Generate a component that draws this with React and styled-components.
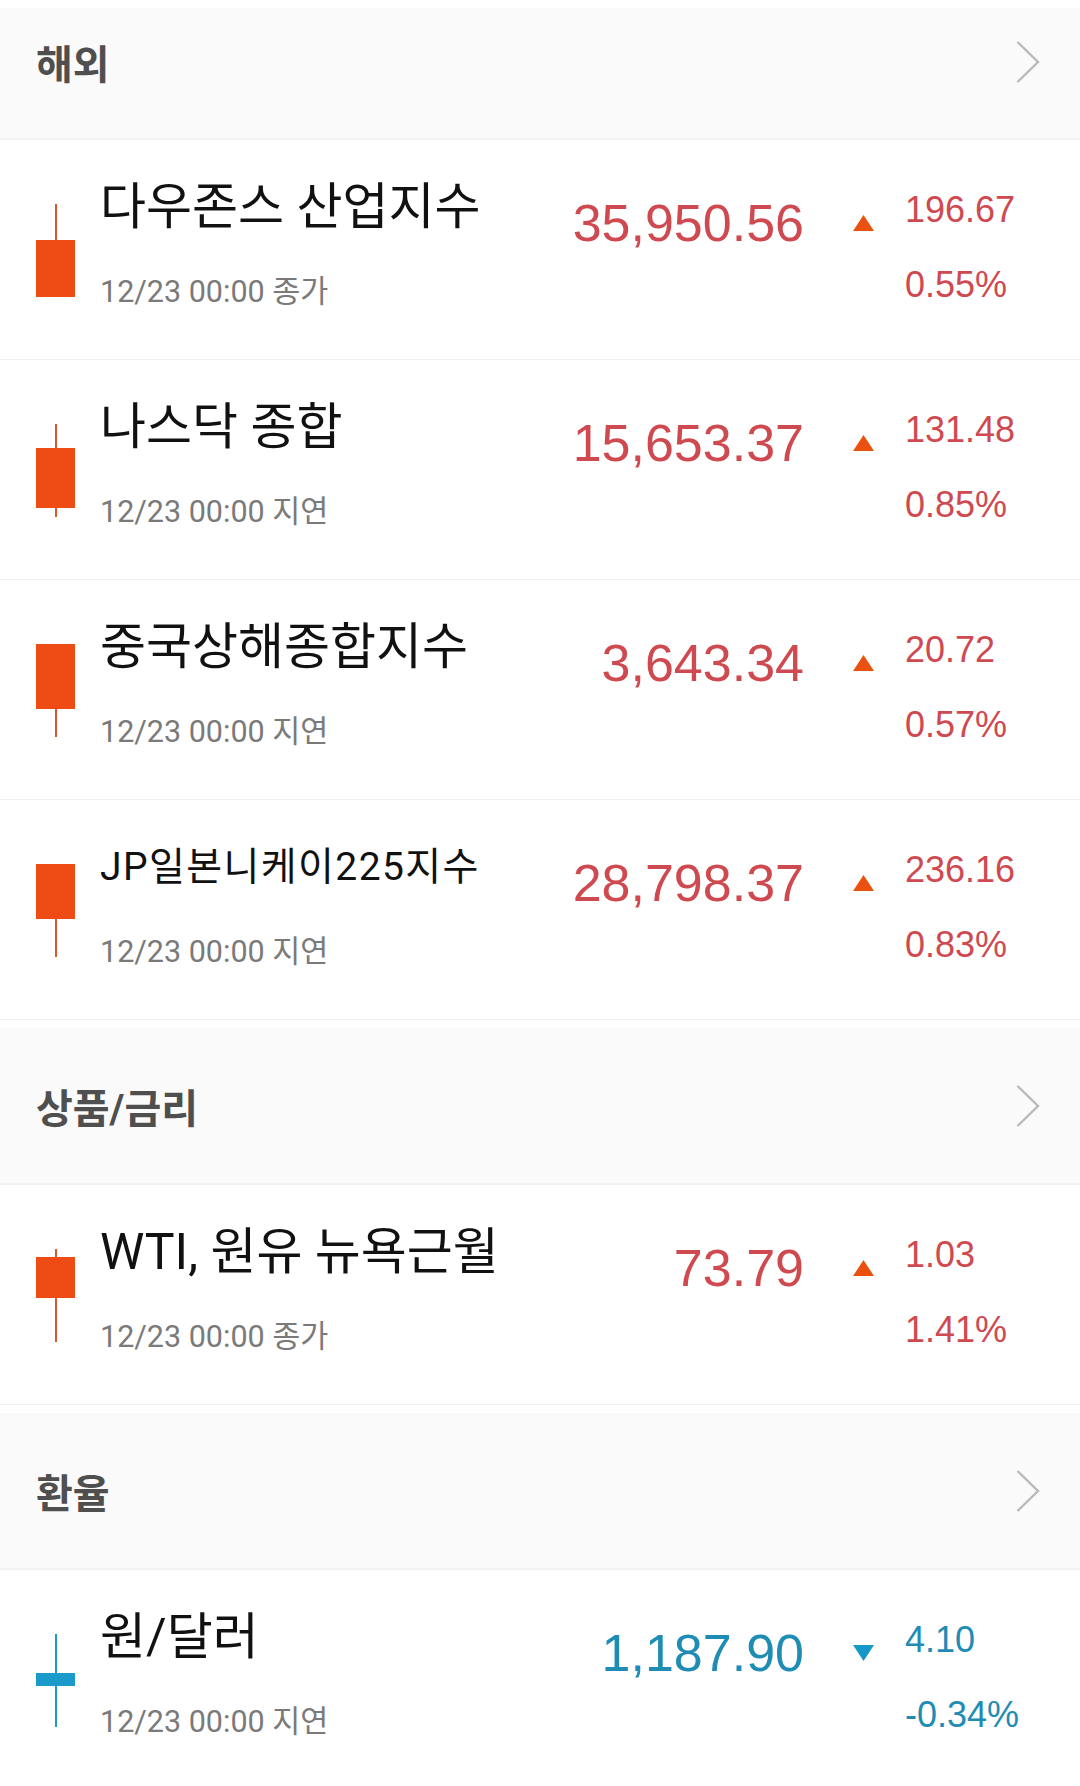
import React from "react";
import styled, { createGlobalStyle } from "styled-components";

const GlobalStyle = createGlobalStyle`
  html, body {
    margin: 0;
    padding: 0;
    background: #ffffff;
  }
  body {
    font-family: Roboto, "Noto Sans CJK KR", sans-serif;
    -webkit-font-smoothing: antialiased;
  }
`;

const Page = styled.div`
  width: 1080px;
  background: #ffffff;
`;

const Section = styled.section`
  margin-top: 8px;
`;

const Header = styled.div`
  box-sizing: border-box;
  height: ${(p) => (p.$first ? "132px" : "157px")};
  padding: 0 40px ${(p) => (p.$first ? "22px" : "0")} 36px;
  display: flex;
  align-items: center;
  justify-content: space-between;
  background: #fafafa;
  border-bottom: 2px solid #f2f2f2;
`;

const HeaderTitle = styled.h2`
  margin: 0;
  padding-top: 8px;
  font-family: Roboto, "Noto Sans CJK KR", sans-serif;
  font-size: 40px;
  font-weight: 700;
  line-height: 42px;
  color: #4f4f4f;
`;

const Row = styled.div`
  box-sizing: border-box;
  height: 220px;
  display: flex;
  align-items: flex-start;
  padding-left: 36px;
  border-bottom: 1px solid #f0f0f0;
`;

const CandleBox = styled.div`
  width: 40px;
  height: 93px;
  margin-top: 64px;
  flex: none;
`;

const Info = styled.div`
  flex: 1;
  min-width: 0;
  margin-left: 24px;
  padding-top: 42px;
`;

const Name = styled.div`
  font-size: ${(p) => (p.$small ? "39px" : "50px")};
  letter-spacing: ${(p) => (p.$small ? "1.4px" : "0")};
  line-height: 50px;
  color: #111111;
  white-space: nowrap;
`;

const Sub = styled.div`
  margin-top: 44px;
  font-size: 30.5px;
  line-height: 31px;
  color: #7a7a7a;
  white-space: nowrap;
`;

const Price = styled.div`
  margin-top: 57px;
  margin-right: 49px;
  font-family: "Liberation Sans", Arial, sans-serif;
  font-size: 52px;
  line-height: 52px;
  color: ${(p) => (p.$down ? "#1f8cb4" : "#cf4a50")};
  text-align: right;
  white-space: nowrap;
`;

const Arrow = styled.svg`
  flex: none;
  margin-top: 75px;
  margin-right: 31px;
`;

const Changes = styled.div`
  width: 175px;
  flex: none;
  padding-top: 52px;
  display: flex;
  flex-direction: column;
  gap: 39px;
`;

const ChangeText = styled.div`
  font-family: "Liberation Sans", Arial, sans-serif;
  font-size: 36px;
  line-height: 36px;
  color: ${(p) => (p.$down ? "#1f8cb4" : "#cf4a50")};
  white-space: nowrap;
`;

const Chevron = () => (
  <svg width="24" height="42" viewBox="0 0 24 42">
    <polyline
      points="1.5,1 22,21 1.5,41"
      fill="none"
      stroke="#b9b9b9"
      strokeWidth="2.4"
    />
  </svg>
);

const Candle = ({ wickTop, bodyTop, bodyBottom, wickBottom, down }) => {
  const body = down ? "#1a9acb" : "#ee4b15";
  const wick = down ? "#1a9acb" : "#d9572b";
  return (
    <svg width="40" height="93" viewBox="0 0 40 93">
      <rect x="19" y={wickTop} width="2" height={wickBottom - wickTop} fill={wick} />
      <rect x="0" y={bodyTop} width="39" height={bodyBottom - bodyTop} fill={body} />
    </svg>
  );
};

const Triangle = ({ down }) => (
  <Arrow width="21" height="16" viewBox="0 0 21 16">
    {down ? (
      <polygon points="0,0 21,0 10.5,16" fill="#1597c8" />
    ) : (
      <polygon points="10.5,0 21,16 0,16" fill="#e8520e" />
    )}
  </Arrow>
);

const sections = [
  {
    title: "해외",
    items: [
      {
        name: "다우존스 산업지수",
        sub: "12/23 00:00 종가",
        price: "35,950.56",
        change: "196.67",
        pct: "0.55%",
        candle: { wickTop: 0, bodyTop: 36, bodyBottom: 93, wickBottom: 93 },
      },
      {
        name: "나스닥 종합",
        sub: "12/23 00:00 지연",
        price: "15,653.37",
        change: "131.48",
        pct: "0.85%",
        candle: { wickTop: 0, bodyTop: 24, bodyBottom: 84, wickBottom: 93 },
      },
      {
        name: "중국상해종합지수",
        sub: "12/23 00:00 지연",
        price: "3,643.34",
        change: "20.72",
        pct: "0.57%",
        candle: { wickTop: 0, bodyTop: 0, bodyBottom: 65, wickBottom: 93 },
      },
      {
        name: "JP일본니케이225지수",
        small: true,
        sub: "12/23 00:00 지연",
        price: "28,798.37",
        change: "236.16",
        pct: "0.83%",
        candle: { wickTop: 0, bodyTop: 0, bodyBottom: 55, wickBottom: 93 },
      },
    ],
  },
  {
    title: "상품/금리",
    items: [
      {
        name: "WTI, 원유 뉴욕근월",
        sub: "12/23 00:00 종가",
        price: "73.79",
        change: "1.03",
        pct: "1.41%",
        candle: { wickTop: 0, bodyTop: 8, bodyBottom: 49, wickBottom: 93 },
      },
    ],
  },
  {
    title: "환율",
    items: [
      {
        name: "원/달러",
        sub: "12/23 00:00 지연",
        price: "1,187.90",
        change: "4.10",
        pct: "-0.34%",
        down: true,
        candle: { wickTop: 0, bodyTop: 39, bodyBottom: 52, wickBottom: 93 },
      },
    ],
  },
];

export default function App() {
  return (
    <Page>
      <GlobalStyle />
      {sections.map((s, si) => (
        <Section key={s.title}>
          <Header $first={si === 0}>
            <HeaderTitle>{s.title}</HeaderTitle>
            <Chevron />
          </Header>
          {s.items.map((it) => (
            <Row key={it.name}>
              <CandleBox>
                <Candle {...it.candle} down={it.down} />
              </CandleBox>
              <Info>
                <Name $small={it.small}>{it.name}</Name>
                <Sub>{it.sub}</Sub>
              </Info>
              <Price $down={it.down}>{it.price}</Price>
              <Triangle down={it.down} />
              <Changes>
                <ChangeText $down={it.down}>{it.change}</ChangeText>
                <ChangeText $down={it.down}>{it.pct}</ChangeText>
              </Changes>
            </Row>
          ))}
        </Section>
      ))}
    </Page>
  );
}
